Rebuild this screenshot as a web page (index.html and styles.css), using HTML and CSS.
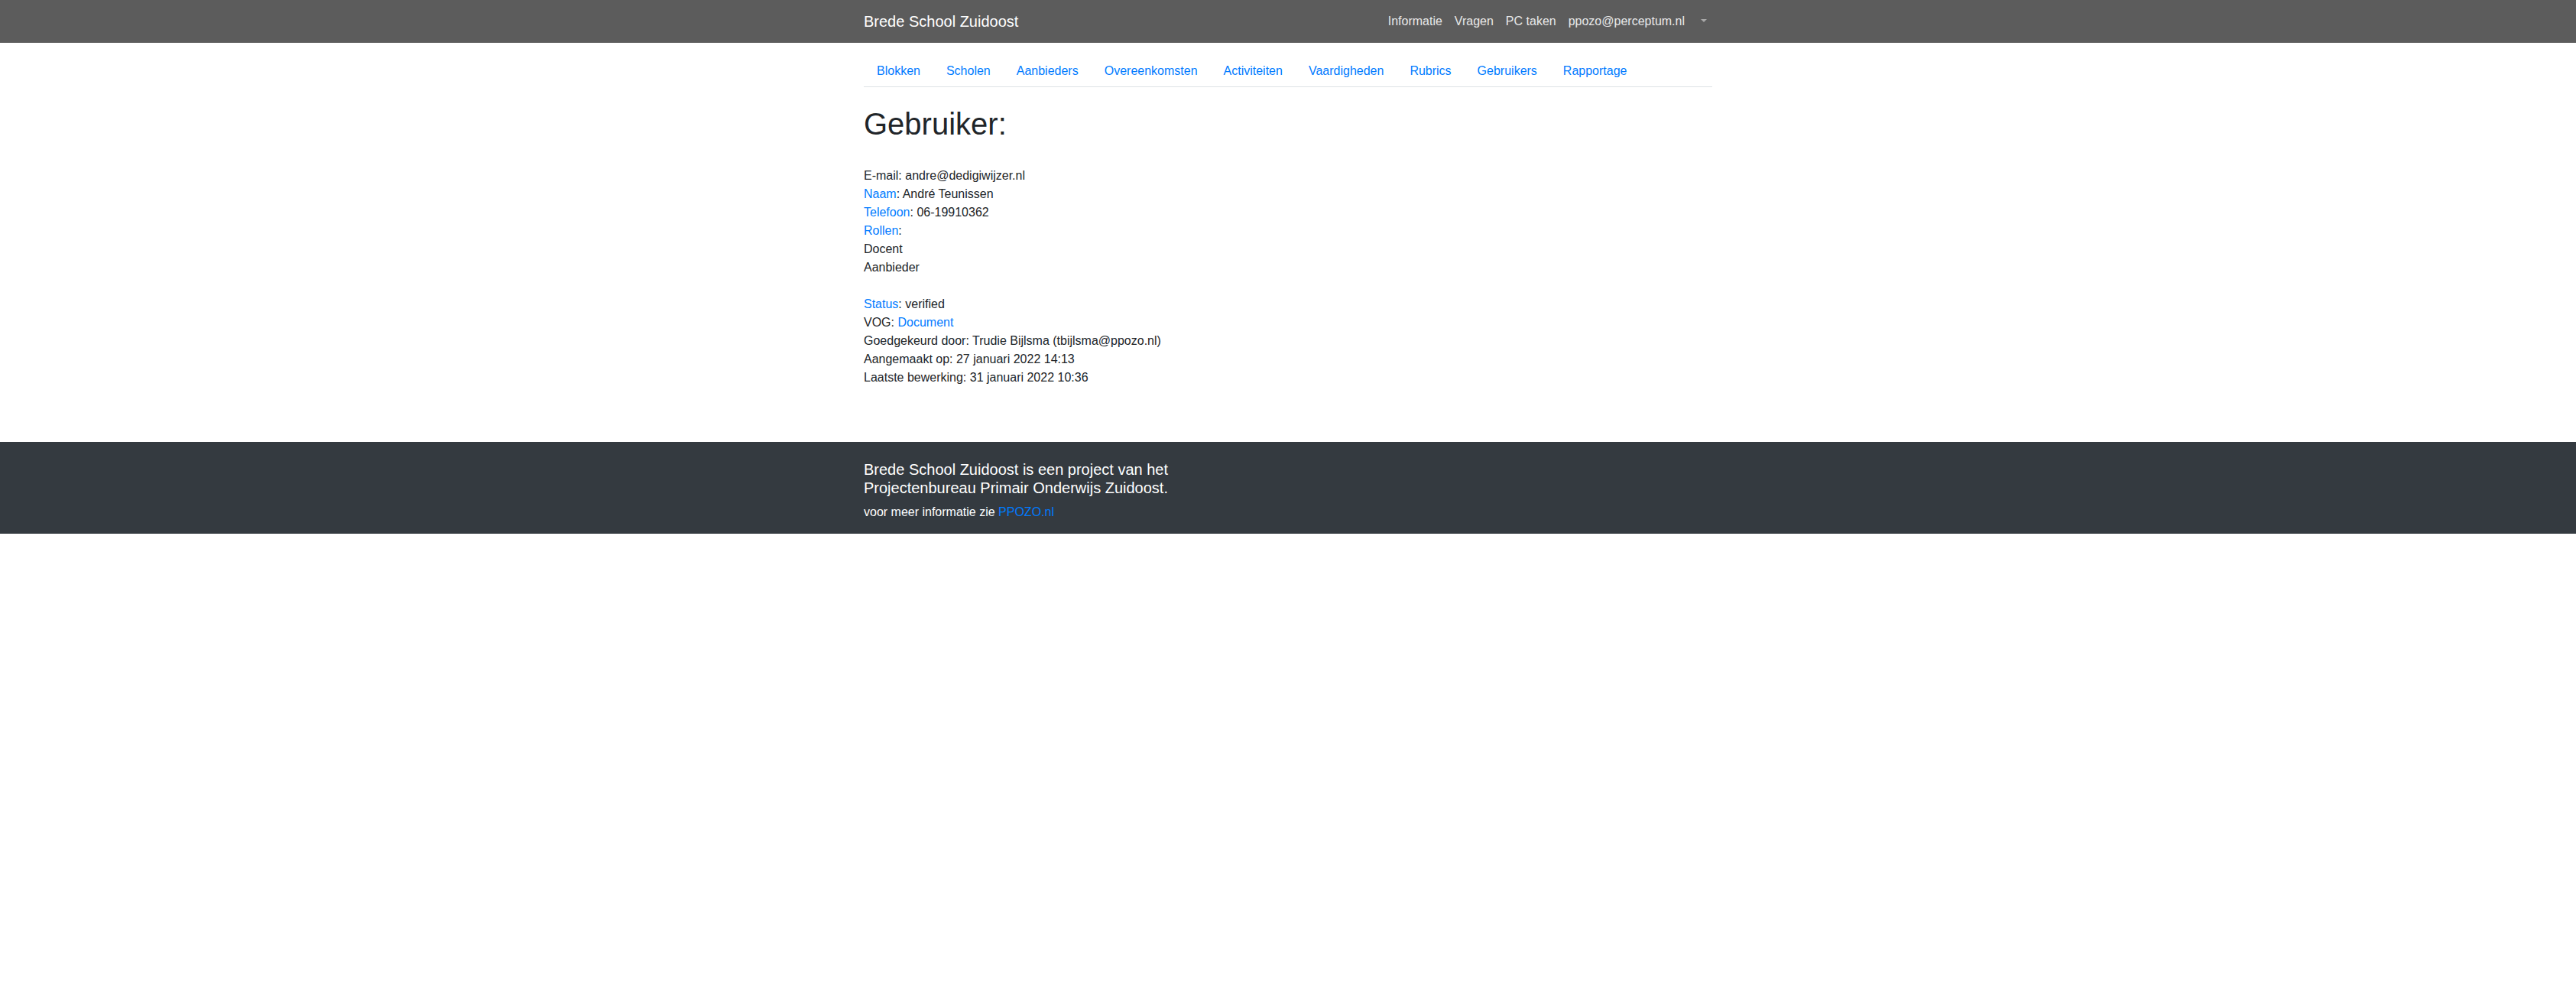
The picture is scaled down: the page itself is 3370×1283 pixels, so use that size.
FILE: index.html
```html
<!DOCTYPE html>
<html lang="nl">
<head>
<meta charset="utf-8">
<title>Gebruiker - Brede School Zuidoost</title>
<link rel="stylesheet" href="styles.css">
</head>
<body>
<nav class="topbar">
  <div class="container topbar-inner">
    <a class="brand" href="#">Brede School Zuidoost</a>
    <ul class="topnav">
      <li><a href="#">Informatie</a></li>
      <li><a href="#">Vragen</a></li>
      <li><a href="#">PC taken</a></li>
      <li><a href="#">ppozo@perceptum.nl</a></li>
      <li><a href="#" class="toggle"><span class="caret"></span></a></li>
    </ul>
  </div>
</nav>

<main class="container page">
  <ul class="tabs">
    <li><a href="#">Blokken</a></li>
    <li><a href="#">Scholen</a></li>
    <li><a href="#">Aanbieders</a></li>
    <li><a href="#">Overeenkomsten</a></li>
    <li><a href="#">Activiteiten</a></li>
    <li><a href="#">Vaardigheden</a></li>
    <li><a href="#">Rubrics</a></li>
    <li><a href="#">Gebruikers</a></li>
    <li><a href="#">Rapportage</a></li>
  </ul>

  <h1 class="title">Gebruiker:</h1>

  <div class="details">
    <div>E-mail: andre@dedigiwijzer.nl</div>
    <div><a href="#">Naam</a>: André Teunissen</div>
    <div><a href="#">Telefoon</a>: 06-19910362</div>
    <div><a href="#">Rollen</a>:</div>
    <div>Docent</div>
    <div>Aanbieder</div>
  </div>
  <div class="details">
    <div><a href="#">Status</a>: verified</div>
    <div>VOG: <a href="#">Document</a></div>
    <div>Goedgekeurd door: Trudie Bijlsma (tbijlsma@ppozo.nl)</div>
    <div>Aangemaakt op: 27 januari 2022 14:13</div>
    <div>Laatste bewerking: 31 januari 2022 10:36</div>
  </div>
</main>

<footer class="footer">
  <div class="container">
    <div class="footer-title">Brede School Zuidoost is een project van het<br>Projectenbureau Primair Onderwijs Zuidoost.</div>
    <p class="footer-note">voor meer informatie zie <a href="#">PPOZO.nl</a></p>
  </div>
</footer>
</body>
</html>
```

FILE: styles.css
```css
* {
  box-sizing: border-box;
}

body {
  margin: 0;
  font-family: "Liberation Sans", Arial, sans-serif;
  font-size: 16px;
  line-height: 1.5;
  color: #212529;
  background: #fff;
}

a {
  color: #007bff;
  text-decoration: none;
}

.container {
  width: 1140px;
  margin: 0 auto;
  padding: 0 15px;
}

/* top bar */
.topbar {
  background: #5c5c5c;
  padding: 8px 0;
}

.topbar-inner {
  display: flex;
  align-items: center;
  justify-content: space-between;
}

.brand {
  color: #fff;
  font-size: 20px;
  line-height: 30px;
  padding: 5px 0;
}

.topnav {
  display: flex;
  list-style: none;
  margin: 0;
  padding: 0;
}

.topnav a {
  display: block;
  padding: 8px;
  line-height: 24px;
  color: #e8e8e8;
}

.topnav .toggle {
  padding-right: 7px;
}

.caret {
  display: inline-block;
  margin-left: 5px;
  vertical-align: 4px;
  border-top: 4px solid #a8a8a8;
  border-left: 4px solid transparent;
  border-right: 4px solid transparent;
}

/* page */
.page {
  padding-top: 16px;
  padding-bottom: 72px;
}

.tabs {
  display: flex;
  list-style: none;
  margin: 0;
  padding: 0;
  border-bottom: 1px solid #dee2e6;
}

.tabs li {
  margin-bottom: -1px;
}

.tabs a {
  display: block;
  padding: 8px 16px;
  line-height: 24px;
  border: 1px solid transparent;
}

.title {
  margin: 24px 0 32px;
  font-size: 40px;
  line-height: 48px;
  font-weight: 400;
}

.details + .details {
  margin-top: 24px;
}

/* footer */
.footer {
  background: #343a40;
  color: #fff;
  padding: 24px 0 16px;
}

.footer-title {
  font-size: 20px;
  line-height: 24px;
  margin-bottom: 8px;
}

.footer-note {
  margin: 0;
}
```
